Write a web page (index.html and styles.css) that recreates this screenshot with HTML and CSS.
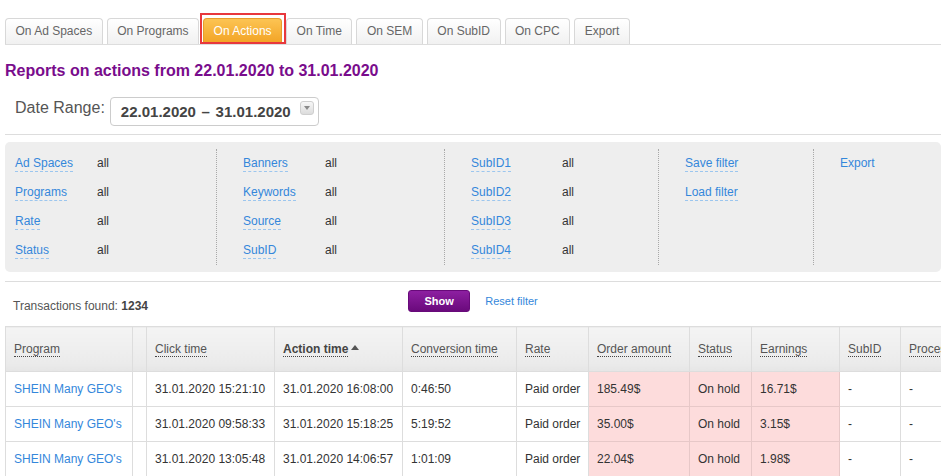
FILE: index.html
```html
<!DOCTYPE html>
<html lang="en">
<head>
<meta charset="utf-8">
<title>Reports on actions</title>
<link rel="stylesheet" href="styles.css">
</head>
<body>
<div class="page">
  <nav class="tabs">
    <a class="tab">On Ad Spaces</a>
    <a class="tab">On Programs</a>
    <a class="tab active">On Actions<span class="highlight"></span></a>
    <a class="tab">On Time</a>
    <a class="tab">On SEM</a>
    <a class="tab">On SubID</a>
    <a class="tab">On CPC</a>
    <a class="tab">Export</a>
  </nav>

  <h1 class="title">Reports on actions from 22.01.2020 to 31.01.2020</h1>

  <div class="range">
    <span class="range-label">Date Range:</span>
    <div class="range-select">
      <span class="range-value">22.01.2020 – 31.01.2020</span>
      <span class="range-arrow"><svg width="6" height="4" viewBox="0 0 6 4"><path d="M0 0H6L3 4Z" fill="#8a8a8a"/></svg></span>
    </div>
  </div>

  <div class="filters">
    <div class="fcol first">
      <div class="frow"><a class="flabel">Ad Spaces</a><span>all</span></div>
      <div class="frow"><a class="flabel">Programs</a><span>all</span></div>
      <div class="frow"><a class="flabel">Rate</a><span>all</span></div>
      <div class="frow"><a class="flabel">Status</a><span>all</span></div>
    </div>
    <div class="fcol">
      <div class="frow"><a class="flabel">Banners</a><span>all</span></div>
      <div class="frow"><a class="flabel">Keywords</a><span>all</span></div>
      <div class="frow"><a class="flabel">Source</a><span>all</span></div>
      <div class="frow"><a class="flabel">SubID</a><span>all</span></div>
    </div>
    <div class="fcol wide">
      <div class="frow"><a class="flabel">SubID1</a><span>all</span></div>
      <div class="frow"><a class="flabel">SubID2</a><span>all</span></div>
      <div class="frow"><a class="flabel">SubID3</a><span>all</span></div>
      <div class="frow"><a class="flabel">SubID4</a><span>all</span></div>
    </div>
    <div class="fcol">
      <div class="frow"><a class="flabel">Save filter</a></div>
      <div class="frow"><a class="flabel">Load filter</a></div>
    </div>
    <div class="fcol">
      <div class="frow"><a class="flabel plain">Export</a></div>
    </div>
  </div>

  <div class="summary">
    <div class="found">Transactions found: <b>1234</b></div>
    <div class="actions">
      <button class="btn-show">Show</button>
      <a class="reset">Reset filter</a>
    </div>
  </div>

  <div class="table-wrap">
    <table class="grid">
      <colgroup>
        <col class="c-program"><col class="c-blank"><col class="c-time"><col class="c-time">
        <col class="c-conv"><col class="c-rate"><col class="c-amount"><col class="c-status">
        <col class="c-earn"><col class="c-subid"><col class="c-proc">
      </colgroup>
      <thead>
        <tr>
          <th><span class="h">Program</span></th>
          <th></th>
          <th><span class="h">Click time</span></th>
          <th class="sorted"><span class="h">Action time</span><svg class="sort" width="8" height="5" viewBox="0 0 8 5"><path d="M0 5L4 0L8 5Z" fill="#555"/></svg></th>
          <th><span class="h">Conversion time</span></th>
          <th><span class="h">Rate</span></th>
          <th><span class="h">Order amount</span></th>
          <th><span class="h">Status</span></th>
          <th><span class="h">Earnings</span></th>
          <th><span class="h">SubID</span></th>
          <th><span class="h">Processed</span></th>
        </tr>
      </thead>
      <tbody>
        <tr>
          <td><a class="link">SHEIN Many GEO's</a></td><td></td>
          <td>31.01.2020 15:21:10</td><td>31.01.2020 16:08:00</td><td>0:46:50</td><td>Paid order</td>
          <td class="pink">185.49$</td><td class="pink">On hold</td><td class="pink">16.71$</td><td>-</td><td>-</td>
        </tr>
        <tr>
          <td><a class="link">SHEIN Many GEO's</a></td><td></td>
          <td>31.01.2020 09:58:33</td><td>31.01.2020 15:18:25</td><td>5:19:52</td><td>Paid order</td>
          <td class="pink">35.00$</td><td class="pink">On hold</td><td class="pink">3.15$</td><td>-</td><td>-</td>
        </tr>
        <tr>
          <td><a class="link">SHEIN Many GEO's</a></td><td></td>
          <td>31.01.2020 13:05:48</td><td>31.01.2020 14:06:57</td><td>1:01:09</td><td>Paid order</td>
          <td class="pink">22.04$</td><td class="pink">On hold</td><td class="pink">1.98$</td><td>-</td><td>-</td>
        </tr>
      </tbody>
    </table>
  </div>
</div>
</body>
</html>
```
FILE: styles.css
```css
body {
  margin: 0;
  background: #fff;
  font-family: "Liberation Sans", Arial, sans-serif;
  font-size: 12px;
  color: #333;
}

.page {
  width: 936px;
  margin-left: 5px;
  padding-top: 18px;
}

/* tabs */
.tabs {
  display: flex;
  height: 26px;
  border-bottom: 1px solid #ddd;
}

.tab {
  position: relative;
  height: 25px;
  line-height: 25px;
  padding: 0 9.5px;
  margin-right: 4px;
  border: 1px solid #d8d8d8;
  border-bottom: none;
  border-radius: 4px 4px 0 0;
  background: linear-gradient(#ffffff, #f1f1f1);
  color: #666;
  cursor: pointer;
}

.tab.active {
  background: linear-gradient(#fcc453, #f2a223);
  border-color: #e69d2c;
  color: #fff;
}

.highlight {
  position: absolute;
  left: -4px;
  right: -5px;
  top: -6px;
  bottom: 0;
  border: 2px solid #e8383d;
}

/* title */
.title {
  margin: 16px 0 0;
  font-size: 16px;
  line-height: 20px;
  font-weight: bold;
  color: #790c8c;
}

/* date range */
.range {
  display: flex;
  align-items: flex-start;
  margin-top: 16px;
  padding: 0 0 8px 10px;
  border-bottom: 1px solid #ddd;
}

.range-label {
  margin: 1px 5px 0 0;
  font-size: 16px;
  line-height: 20px;
  color: #555;
}

.range-select {
  display: flex;
  justify-content: space-between;
  align-items: flex-start;
  box-sizing: border-box;
  width: 209px;
  height: 29px;
  padding: 0 4px 0 10px;
  border: 1px solid #ccc;
  border-radius: 4px;
}

.range-value {
  font-size: 15px;
  line-height: 28px;
  font-weight: bold;
  word-spacing: 1.5px;
  color: #444;
}

.range-arrow {
  display: flex;
  align-items: center;
  justify-content: center;
  box-sizing: border-box;
  width: 14px;
  height: 14px;
  margin-top: 3px;
  border: 1px solid #cfcfcf;
  border-radius: 3px;
  background: linear-gradient(#f7f7f7, #dcdcdc);
}

/* filters */
.filters {
  display: grid;
  grid-template-columns: 211px 228px 214px 155px 1fr;
  margin-top: 7px;
  padding: 7px 0;
  background: #eee;
  border-radius: 5px;
}

.fcol {
  padding-left: 26px;
  border-left: 1px dotted #a8a8a8;
}

.fcol.first {
  padding-left: 10px;
  border-left: none;
}

.frow {
  display: grid;
  grid-template-columns: 82px auto;
  align-items: start;
  box-sizing: border-box;
  height: 29px;
  padding-top: 7px;
  line-height: 15px;
  color: #333;
}

.fcol.wide .frow {
  grid-template-columns: 91px auto;
}

.flabel {
  justify-self: start;
  color: #3487db;
  border-bottom: 1px dashed #9cc6ee;
  cursor: pointer;
}

.flabel.plain {
  border-bottom: none;
}

/* summary */
.summary {
  display: grid;
  grid-template-columns: 1fr auto 1fr;
  height: 44px;
  margin-top: 9px;
  border-top: 1px solid #ddd;
}

.found {
  margin-top: 17px;
  padding-left: 8px;
  line-height: 15px;
  color: #555;
}

.found b {
  color: #444;
}

.actions {
  display: flex;
  align-items: center;
  gap: 15px;
  height: 22px;
  margin-top: 8px;
}

.btn-show {
  width: 62px;
  height: 22px;
  padding: 0;
  border: 1px solid #680a7a;
  border-radius: 3px;
  background: linear-gradient(#8d1fa1, #6a0a7c);
  color: #fff;
  font-family: "Liberation Sans", Arial, sans-serif;
  font-size: 11px;
  font-weight: bold;
}

.reset {
  color: #3487db;
  font-size: 11px;
  cursor: pointer;
}

/* table */
.table-wrap {
  width: 936px;
  overflow: hidden;
}

.grid {
  width: 1005px;
  border-collapse: collapse;
  table-layout: fixed;
}

.c-program { width: 127px; }
.c-blank { width: 14px; }
.c-time { width: 128px; }
.c-conv { width: 114px; }
.c-rate { width: 72px; }
.c-amount { width: 101px; }
.c-status { width: 62px; }
.c-earn { width: 88px; }
.c-subid { width: 61px; }
.c-proc { width: 110px; }

.grid th {
  height: 44px;
  padding: 0 8px;
  border: 1px solid #ddd;
  background: linear-gradient(#f4f4f4, #ebebeb 80%, #e6e6e6);
  text-align: left;
  font-weight: normal;
  color: #555;
  white-space: nowrap;
  overflow: hidden;
}

.grid th .h {
  display: inline-block;
  line-height: 14px;
  border-bottom: 1px dotted #444;
}

.grid th.sorted {
  font-weight: bold;
  color: #444;
}

.sort {
  margin-left: 3px;
  vertical-align: 3px;
}

.grid td {
  height: 34px;
  padding: 0 8px;
  border: 1px solid #ddd;
  color: #333;
  white-space: nowrap;
}

.grid td.pink {
  background: #fddcdc;
  border-color: #e7c8c8;
}

.link {
  color: #3487db;
  cursor: pointer;
}
```
